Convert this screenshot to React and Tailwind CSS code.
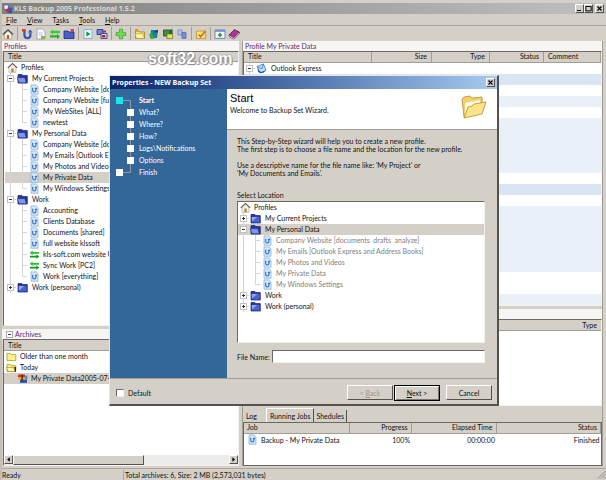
import React from "react";

const svg = "block h-[11px] w-[11px] shrink-0";

function HomeIcon() {
  return (
    <svg viewBox="0 0 11 11" className={svg}>
      <path d="M2 5v5.3h7V5L5.5 2z" fill="#f3efe4" stroke="#a8a296" strokeWidth=".6" />
      <path d="M.8 5.8 5.5 1.4l4.7 4.4" fill="none" stroke="#5b5550" strokeWidth="1.1" />
      <path d="M4.4 10.3V6.5h2.2v3.8z" fill="#b77a35" />
    </svg>
  );
}

function FolderIcon({ open }) {
  return (
    <svg viewBox="0 0 11 11" className={svg}>
      <path d="M1 1.6h4l1 1h4.3v7.4H1z" fill="#2338a0" stroke="#111c66" strokeWidth=".7" />
      {open ? (
        <path d="M.2 4.6h7.6l1.6 5.2H2z" fill="#7f95ea" stroke="#1b2a80" strokeWidth=".6" />
      ) : (
        <path d="M1.6 3.8h8v5.6h-8z" fill="#4a62d0" />
      )}
      {!open && <path d="M1.8 4h5.4L2 8.6z" fill="#93a6f0" />}
    </svg>
  );
}

function DocIcon() {
  return (
    <svg viewBox="0 0 11 11" className={svg}>
      <path d="M2 .9h5.2L9 2.7v7.5H2z" fill="#d5e8fb" stroke="#7fa8d4" strokeWidth=".7" />
      <path d="M3.7 3.8v2.6c0 2 3.2 2 3.2 0V4.8" fill="none" stroke="#2a6cc6" strokeWidth="1.1" />
      <path d="M5.5 5 7 3.2 8.5 5z" fill="#2a6cc6" />
    </svg>
  );
}

function SyncIcon() {
  return (
    <svg viewBox="0 0 11 11" className={svg}>
      <path d="M.8 3.8 3.6 1.4v1.5H10v1.8H3.6v1.5z" fill="#25c32b" />
      <path d="M10.2 7.6 7.4 5.2v1.5H1v1.8h6.4V10z" fill="#149a1d" />
    </svg>
  );
}

function YellowFolder({ open }) {
  return (
    <svg viewBox="0 0 11 11" className={svg}>
      <path d="M1 2.4h3.4l1 1.2h4.4v6H1z" fill="#fbf08a" stroke="#a89b2c" strokeWidth=".8" />
      {open && <path d="M.5 5.4h7l1.6 4.2H2z" fill="#fff7a8" stroke="#8c7f1d" strokeWidth=".6" />}
      {open && <path d="M8.2 5h1.8v4.8H9z" fill="#2b2810" />}
    </svg>
  );
}

function ArchiveIcon() {
  return (
    <svg viewBox="0 0 11 11" className={svg}>
      <path d="M1 1.5h7v3H1z" fill="#d8321e" />
      <path d="M1 4.5h7v2H1z" fill="#f0b41c" />
      <path d="M3 6.5h7v3.4H3z" fill="#2c57b8" />
      <path d="M8 2.5h2.4v4H8z" fill="#3b9bd0" />
      <path d="M4.4 1.5h1.4v7H4.4z" fill="#4b2a1c" />
    </svg>
  );
}

function MailIcon() {
  return (
    <svg viewBox="0 0 11 11" className={svg}>
      <path d="M1 3.5 7.5 1l2.5 6.5L4 10z" fill="#bfe0f8" stroke="#2f78c2" strokeWidth=".8" />
      <path d="m1.2 3.6 4.8 2.2L7.5 1" fill="none" stroke="#2f78c2" strokeWidth=".8" />
      <path d="M2 6.5c.5 3 4 4 6.5 1.6" fill="none" stroke="#1750a0" strokeWidth="1.3" />
    </svg>
  );
}

const icons = {
  home: <HomeIcon />,
  folder: <FolderIcon />,
  open: <FolderIcon open />,
  doc: <DocIcon />,
  sync: <SyncIcon />,
};

function Expander({ plus }) {
  return (
    <svg viewBox="0 0 11 11" className={svg}>
      <path d="M5.5 0v3M5.5 8v3M8 5.5h3" stroke="#d4d4d4" />
      <rect x="2.5" y="2.5" width="6" height="6" fill="#fff" stroke="#c0c0c0" />
      <path d="M4 5.5h3" stroke="#333" />
      {plus && <path d="M5.5 4v3" stroke="#333" />}
    </svg>
  );
}

function Guide({ last, branch }) {
  return (
    <svg viewBox="0 0 11 11" className={svg}>
      <path d={last ? "M5.5 0v5.5" : "M5.5 0v11"} stroke="#d4d4d4" />
      {branch && <path d="M5.5 5.5H10" stroke="#d4d4d4" />}
    </svg>
  );
}

function Tree({ rows, label }) {
  return (
    <ul role="tree" aria-label={label} className="m-0 list-none">
      {rows.map((r, i) => (
        <li
          key={i}
          role="treeitem"
          aria-selected={!!r.sel}
          className={"flex h-[11px] items-center whitespace-pre leading-[11px] " + (r.sel ? "bg-[#d4d0c8]" : "")}
        >
          {r.level === 0 && <span className="flex w-[13px] justify-end">{icons[r.icon]}</span>}
          {r.level === 1 && (
            <>
              <Expander plus={r.icon === "folder"} />
              <span className="flex w-[13px] justify-center">{icons[r.icon]}</span>
            </>
          )}
          {r.level === 2 && (
            <>
              <Guide />
              <span className="flex w-[13px] justify-center">
                <Guide branch last={r.last} />
              </span>
              {icons[r.icon]}
            </>
          )}
          <span className={"pl-[3px] " + (r.dim ? "text-[#808080]" : "")}>{r.text}</span>
        </li>
      ))}
    </ul>
  );
}

const profileRows = [
  { level: 0, icon: "home", text: "Profiles" },
  { level: 1, icon: "open", text: "My Current Projects" },
  { level: 2, icon: "doc", text: "Company Website [doc" },
  { level: 2, icon: "doc", text: "Company Website [full" },
  { level: 2, icon: "doc", text: "My WebSites [ALL]" },
  { level: 2, icon: "doc", text: "newtest", last: true },
  { level: 1, icon: "open", text: "My Personal Data" },
  { level: 2, icon: "doc", text: "Company Website [doc" },
  { level: 2, icon: "doc", text: "My Emails [Outlook Exp" },
  { level: 2, icon: "doc", text: "My Photos and Videos" },
  { level: 2, icon: "doc", text: "My Private Data", sel: true },
  { level: 2, icon: "doc", text: "My Windows Settings", last: true },
  { level: 1, icon: "open", text: "Work" },
  { level: 2, icon: "doc", text: "Accounting" },
  { level: 2, icon: "doc", text: "Clients Database" },
  { level: 2, icon: "doc", text: "Documents [shared]" },
  { level: 2, icon: "doc", text: "full website klssoft" },
  { level: 2, icon: "sync", text: "kls-soft.com website UP" },
  { level: 2, icon: "sync", text: "Sync Work [PC2]" },
  { level: 2, icon: "doc", text: "Work [everything]", last: true },
  { level: 1, icon: "folder", text: "Work (personal)" },
];

const locationRows = [
  { level: 0, icon: "home", text: "Profiles" },
  { level: 1, icon: "folder", text: "My Current Projects" },
  { level: 1, icon: "open", text: "My Personal Data", sel: true },
  { level: 2, icon: "doc", dim: true, text: "Company Website [documents  drafts  analyze]" },
  { level: 2, icon: "doc", dim: true, text: "My Emails [Outlook Express and Address Books]" },
  { level: 2, icon: "doc", dim: true, text: "My Photos and Videos" },
  { level: 2, icon: "doc", dim: true, text: "My Private Data" },
  { level: 2, icon: "doc", dim: true, text: "My Windows Settings", last: true },
  { level: 1, icon: "folder", text: "Work" },
  { level: 1, icon: "folder", text: "Work (personal)" },
];

const sunken =
  "border border-t-[#6b6862] border-l-[#6b6862] border-r-[#f4f2ee] border-b-[#f4f2ee] bg-white";
const raised =
  "border border-t-white border-l-white border-r-[#55524e] border-b-[#55524e] bg-[#d4d0c8]";
const head =
  "h-[10px] border-b border-r border-[#a19d95] bg-[#d4d0c8] p-0 leading-[9px] font-normal";

function ToolSep() {
  return <span className="mx-[2px] h-[13px] w-px bg-[#a29e96]" />;
}

function Tool({ label, children }) {
  return (
    <button type="button" aria-label={label} className="flex w-[14px] justify-center">
      <svg viewBox="0 0 12 12" className="block h-[12px] w-[12px]">
        {children}
      </svg>
    </button>
  );
}

function Toolbar() {
  return (
    <div className="-ml-px flex h-[15px] shrink-0 items-center">
      <Tool label="Home">
        <path d="M2.5 6v5h7V6L6 2.6z" fill="#f7f3ea" stroke="#9b958a" strokeWidth=".6" />
        <path d="M1 6.5 6 1.8l5 4.7" fill="none" stroke="#4b4642" strokeWidth="1.2" />
        <path d="M4.8 11V7h2.4v4z" fill="#b06a2a" />
      </Tool>
      <ToolSep />
      <Tool label="New backup">
        <path d="M3.4 2v4.8c0 4.4 6 4.4 6 0V4.6" fill="none" stroke="#3355b8" strokeWidth="2.2" />
        <path d="M6.8 4.6 9.2 1.6l2.4 3z" fill="#3355b8" />
        <path d="M1 1h3.6v2.6H1z" fill="#d43c2c" />
      </Tool>
      <Tool label="New document">
        <path d="M2 1h5.6L10 3.4V11H2z" fill="#fafcff" stroke="#8fa0b4" strokeWidth=".8" />
        <path d="M3.6 5h4M3.6 7h4" stroke="#9db4cc" strokeWidth=".8" />
        <path d="M6 8h4v3H6z" fill="#8fb04f" />
      </Tool>
      <Tool label="Synchronize">
        <path d="M1 4 4 1.2v1.6h7v2.4H4v1.6z" fill="#35cc36" />
        <path d="M11 8.4 8 5.8v1.4H1v2.4h7v1.6z" fill="#22b42a" />
      </Tool>
      <Tool label="Folder">
        <path d="M1 3h4l1 1h5v6.5H1z" fill="#4b5fc8" stroke="#1c2878" strokeWidth=".8" />
        <path d="M7.8 1h3v3h-3z" fill="#c83a6a" />
      </Tool>
      <ToolSep />
      <Tool label="Run">
        <path d="M2 1.5h8v9H2z" fill="#e2f2ff" stroke="#7ba6cf" strokeWidth=".8" />
        <path d="M4.4 3.4 8.4 6l-4 2.6z" fill="#15952a" />
      </Tool>
      <Tool label="Restore">
        <path d="M1 1.5h6v5H1z" fill="#6d7cd4" stroke="#25317d" strokeWidth=".8" />
        <path d="M5 5.5h6v5H5z" fill="#d9dcf8" stroke="#25317d" strokeWidth=".8" />
        <path d="M6 7h3.4v2.6H6zM7 2.4h3v2H7z" fill="#b62d34" />
      </Tool>
      <ToolSep />
      <Tool label="Add">
        <path d="M4.4 1.2h3.2v3.2h3.2v3.2H7.6v3.2H4.4V7.6H1.2V4.4h3.2z" fill="#6fdc4c" stroke="#2f9f2b" strokeWidth=".7" />
      </Tool>
      <ToolSep />
      <Tool label="Open folder">
        <path d="M1.5 3h3.4l1 1h4.6v6.4h-9z" fill="#f5e36c" stroke="#988320" strokeWidth=".8" />
        <path d="M1 5.8h8l1.4 4.6h-8z" fill="#fff3a2" stroke="#988320" strokeWidth=".5" />
        <path d="M1 1h3v2.4H1z" fill="#f08f28" />
      </Tool>
      <Tool label="Filter">
        <path d="M3 2h7l-1 8H2z" fill="#1a8290" />
        <path d="M1 6.6 4 5l3 5.4-4 .6z" fill="#3aa346" />
        <path d="m5 4 5-2.6v3.4z" fill="#1d3fa4" />
      </Tool>
      <Tool label="Extract">
        <path d="M1.5 2h6v6h-6z" fill="#3d8f3c" stroke="#174f1e" strokeWidth=".8" />
        <path d="M5 6h5.6v4.6H5z" fill="#f1dc62" stroke="#8a7618" strokeWidth=".8" />
        <path d="M8 1.4h2.6V6H8z" fill="#20663c" />
      </Tool>
      <Tool label="Export">
        <path d="M2 2h4v5H2z" fill="#b7c4ef" stroke="#6c7cc0" strokeWidth=".7" />
        <path d="M6 4.4h4v6H6z" fill="#7e8edb" stroke="#4c5ab0" strokeWidth=".7" />
      </Tool>
      <ToolSep />
      <Tool label="Options">
        <path d="M1.4 3h9.2v7.6H1.4z" fill="#f7e27a" stroke="#b08f28" strokeWidth=".8" />
        <path d="m3.6 6.4 2 2.4 4.6-5.6" fill="none" stroke="#d8641c" strokeWidth="1.4" />
      </Tool>
      <ToolSep />
      <Tool label="Window">
        <path d="M1 2h10v8.4H1z" fill="#f2f6fc" stroke="#5773a8" strokeWidth=".8" />
        <path d="M1 2h10v1.8H1z" fill="#6c8fd0" />
        <path d="M6 4.6 8.4 7 6 9.4 3.6 7z" fill="#3fa04a" />
      </Tool>
      <Tool label="Help">
        <path d="m1 7 5.4-5.4L11.4 4 6 9.8z" fill="#a93593" stroke="#5a1450" strokeWidth=".7" />
        <path d="m1 7 5 2.8L11.4 4v1.6L6 11.2 1 8.6z" fill="#fff" stroke="#5a1450" strokeWidth=".6" />
      </Tool>
    </div>
  );
}

function WinButton({ label, children }) {
  return (
    <button type="button" aria-label={label} className={raised + " flex h-[9px] w-[9px] items-center justify-center"}>
      <svg viewBox="0 0 7 7" className="block h-[7px] w-[7px]">
        {children}
      </svg>
    </button>
  );
}

const cross = <path d="m1.5 1.5 4 4m0-4-4 4" stroke="#000" strokeWidth="1.1" />;

const stripes = [
  "bg-white", "bg-[#d9e5f2]", "bg-white", "bg-[#e9f0f8]", "bg-white",
  "bg-[#e9f0f8]", "bg-[#e9f0f8]", "bg-[#e9f0f8]", "bg-[#e9f0f8]", "bg-[#e9f0f8]",
  "bg-white", "bg-[#d9e5f2]", "bg-white",
  "bg-[#e9f0f8]", "bg-[#e9f0f8]", "bg-[#e9f0f8]", "bg-[#e9f0f8]", "bg-[#e9f0f8]", "bg-[#e9f0f8]",
  "bg-white", "bg-white", "bg-[#e9f0f8]",
];

function DetailsTable() {
  return (
    <table className="w-full table-fixed border-collapse text-left">
      <thead>
        <tr>
          <th className={head + " pl-[4px]"}>Title</th>
          <th className={head + " w-[60px] pr-[4px] text-right"}>Size</th>
          <th className={head + " w-[58px] pr-[4px] text-right"}>Type</th>
          <th className={head + " w-[54px] pr-[4px] text-right"}>Status</th>
          <th className={head + " w-[57px] pl-[4px]"}>Comment</th>
        </tr>
      </thead>
      <tbody>
        {stripes.map((c, i) => (
          <tr key={i} className={c}>
            <td colSpan={5} className="h-[11px] p-0 leading-[11px]">
              {i === 0 && (
                <span className="flex items-center">
                  <Expander />
                  <span className="pl-px"><MailIcon /></span>
                  <span className="pl-[4px]">Outlook Express</span>
                </span>
              )}
              {i === 1 && (
                <span className="flex items-center pl-[24px]">
                  <YellowFolder />
                </span>
              )}
            </td>
          </tr>
        ))}
      </tbody>
    </table>
  );
}

function PaneLabel({ children }) {
  return (
    <div className="flex h-[10px] shrink-0 items-center bg-[#f6f5f3] pl-[2px] leading-[10px] text-[#5c2a6e]">
      {children}
    </div>
  );
}

function Archives() {
  return (
    <section className="flex h-[137px] shrink-0 flex-col">
      <PaneLabel>
        <svg viewBox="0 0 7 7" className="mx-[2px] block h-[7px] w-[7px]">
          <rect x=".5" y=".5" width="6" height="6" fill="#fff" stroke="#aaa" />
          <path d="M2 3.5h3" stroke="#333" />
        </svg>
        Archives
      </PaneLabel>
      <div className={sunken + " ml-px flex min-h-0 flex-1 flex-col"}>
        <div className="h-[11px] shrink-0 border-b border-[#a19d95] bg-[#d4d0c8] pl-[4px] leading-[10px]">Title</div>
        <ul className="m-0 flex-1 list-none overflow-hidden">
          <li className="flex h-[11px] items-center pl-[2px] leading-[11px]">
            <YellowFolder /><span className="pl-[3px]">Older than one month</span>
          </li>
          <li className="flex h-[11px] items-center pl-[2px] leading-[11px]">
            <YellowFolder open /><span className="pl-[3px]">Today</span>
          </li>
          <li className="flex h-[11px] items-center bg-[#d4d0c8] pl-[13px] leading-[11px]">
            <ArchiveIcon /><span className="whitespace-nowrap pl-[3px]">My Private Data2005-07-08</span>
          </li>
        </ul>
        <div className="flex h-[10px] shrink-0 bg-[#edebe7]">
          <WinButton label="Scroll left"><path d="M4.8 1.2v4.6L2.2 3.5z" fill="#000" /></WinButton>
          <div className={raised + " w-[131px]"} />
          <div className="flex-1" />
          <WinButton label="Scroll right"><path d="M2.4 1.2v4.6L5 3.5z" fill="#000" /></WinButton>
        </div>
      </div>
    </section>
  );
}

function Jobs() {
  return (
    <section className="flex h-[60px] shrink-0 flex-col">
      <div role="tablist" className="flex h-[16px] shrink-0 items-end">
        <button type="button" role="tab" className="h-[12px] pl-[3px] pr-[9px] leading-[12px]">Log</button>
        <button
          type="button"
          role="tab"
          aria-selected="true"
          className="h-[14px] border-r border-t border-l border-t-white border-l-white border-r-[#55524e] px-[3px] leading-[12px]"
        >
          Running Jobs
        </button>
        <button type="button" role="tab" className="h-[12px] border-r border-[#55524e] px-[2px] leading-[12px]">
          Shedules
        </button>
      </div>
      <div className="min-h-0 flex-1 border border-[#6b6862] bg-white">
        <table className="w-full table-fixed border-collapse whitespace-nowrap text-right">
          <thead>
            <tr>
              <th className={head + " w-[105px] pl-[3px] text-left"}>Job</th>
              <th className={head + " w-[62px] pr-[3px]"}>Progress</th>
              <th className={head + " w-[85px] pr-[3px]"}>Elapsed Time</th>
              <th className={head + " pr-[3px]"}>Status</th>
            </tr>
          </thead>
          <tbody>
            <tr>
              <td className="p-0 text-left">
                <span className="flex h-[12px] items-center pl-[3px]">
                  <DocIcon /><span className="pl-[3px]">Backup - My Private Data</span>
                </span>
              </td>
              <td className="p-0 pr-px">100%</td>
              <td className="p-0 pr-px">00:00:00</td>
              <td className="p-0 pr-px">Finished</td>
            </tr>
          </tbody>
        </table>
      </div>
    </section>
  );
}

const steps = ["Start", "What?", "Where?", "How?", "Logs\\Notifications", "Options", "Finish"];

function Wizard() {
  return (
    <div
      role="dialog"
      aria-label="Properties - NEW Backup Set"
      className="absolute left-[107px] top-[75px] w-[390px] border border-b-2 border-r-2 border-t-[#e8e6e2] border-l-[#e8e6e2] border-r-[#55524e] border-b-[#55524e] bg-[#d4d0c8]"
    >
      <div className="flex h-[13px] items-center justify-between bg-linear-to-r from-[#0a246a] to-[#a6caf0] pl-[2px] pr-[2px] font-['Open_Sans','Noto_Sans',sans-serif] text-[7px] font-bold text-white">
        <span>Properties - NEW Backup Set</span>
        <WinButton label="Close">{cross}</WinButton>
      </div>
      <div className="flex h-[289px]">
        <ol className="m-0 w-[117px] shrink-0 list-none bg-[#336699] pl-[6px] pt-[5px] text-white">
          {steps.map((s, i) => {
            const edge = i === 0 || i === 6;
            return (
              <li key={s} className="flex h-[12px] items-center leading-[12px]">
                <svg viewBox="0 0 18 12" className="block h-[12px] w-[18px]">
                  {i === 0 && <path d="M7 6.5h7.5V12" fill="none" stroke="#8f9aa5" />}
                  {i === 6 && <path d="M7 6.5h7.5V0" fill="none" stroke="#8f9aa5" />}
                  {!edge && <path d="M14.5 0v12" stroke="#8f9aa5" />}
                  <rect x={edge ? 0 : 11} y="3" width="7" height="7" fill={i === 0 ? "#19e6e6" : "#fff"} />
                </svg>
                <span className={"pl-[5px] " + (i === 0 ? "font-bold" : "")}>{s}</span>
              </li>
            );
          })}
        </ol>
        <div className="flex min-w-0 flex-1 flex-col">
          <header className="flex h-[41px] shrink-0 justify-between border-b border-[#a19d95] bg-white pl-[3px] pr-[9px] pt-[2px]">
            <div>
              <h1 className="font-['Liberation_Sans',Arial,sans-serif] text-[11px] leading-[14px] text-black">Start</h1>
              <p className="leading-[10px]">Welcome to Backup Set Wizard.</p>
            </div>
            <svg viewBox="0 0 28 26" className="mt-[3px] block h-[26px] w-[28px]">
              <path d="M2 5 4 3l6-1 2 2 10-1v8L4 23z" fill="#efd06a" stroke="#b58d2c" strokeWidth=".8" />
              <path d="M5 9 20 6l1 12L5 22z" fill="#fffbe0" />
              <path d="M8 13 12 12l2-2 12-2-4 12L4 24z" fill="#fbe487" stroke="#b58d2c" strokeWidth=".8" />
            </svg>
          </header>
          <div className="flex flex-1 flex-col pl-[10px] pr-[12px] pt-[7px]">
            <p className="whitespace-nowrap leading-[8px]">
              This Step-by-Step wizard will help you to create a new profile.
              <br />
              The first step is to choose a file name and the location for the new profile.
            </p>
            <p className="mt-[8px] leading-[8px]">
              Use a descriptive name for the file name like: &apos;My Project&apos; or
              <br />
              &apos;My Documents and Emails&apos;.
            </p>
            <p className="mt-[13px] leading-[10px]">Select Location</p>
            <div className={sunken + " mt-px h-[142px] shrink-0"}>
              <Tree rows={locationRows} label="Select Location" />
            </div>
            <div className="mt-[7px] flex items-center">
              <label htmlFor="file-name" className="w-[35px] whitespace-nowrap">File Name:</label>
              <input id="file-name" autoFocus className={sunken + " h-[13px] min-w-0 flex-1 px-px outline-none"} />
            </div>
          </div>
        </div>
      </div>
      <footer className="flex h-[26px] items-center border-t border-[#a19d95] pl-[6px] pr-[5px] pt-[2px]">
        <label className="flex flex-1 items-center gap-[4px]">
          <input type="checkbox" className={sunken + " h-[8px] w-[8px] appearance-none"} />
          Default
        </label>
        <button type="button" disabled className={raised + " h-[15px] w-[46px] text-[#9a968e]"}>
          &lt; <u>B</u>ack
        </button>
        <button type="button" className="ml-px h-[16px] w-[46px] border border-black bg-[#d4d0c8] shadow-[inset_1px_1px_0_#fff,inset_-1px_-1px_0_#77736d]">
          <u>N</u>ext &gt;
        </button>
        <button type="button" className={raised + " ml-[6px] h-[15px] w-[46px]"}>Cancel</button>
      </footer>
    </div>
  );
}

export default function App() {
  return (
    <main className="relative flex h-screen flex-col overflow-hidden border-l-2 border-[#c4c0b8] bg-[#d4d0c8] font-['Lato',Roboto,sans-serif] text-[7px] leading-[10px] text-[#111]">
      <div className="mt-[3px] flex h-[11px] shrink-0 items-center bg-linear-to-r from-[#808080] to-[#c0c0c0] pl-px pr-[2px] font-['Open_Sans','Noto_Sans',sans-serif] text-[7px] font-bold text-[#dcd9d2]">
        <svg viewBox="0 0 11 11" className="block h-[10px] w-[10px]">
          <path d="M1 1h5v5H1z" fill="#f2f2ff" stroke="#5a5ab4" />
          <path d="M5 4h5v6H5z" fill="#3454b8" />
          <path d="M3 5.4h4v3H3z" fill="#c03440" />
        </svg>
        <span className="flex-1 pl-px">KLS Backup 2005 Professional 1.5.2</span>
        <WinButton label="Minimize"><path d="M1 5.5h4" stroke="#000" /></WinButton>
        <WinButton label="Maximize"><path d="M.8 1.5h5.4v4.4H.8z" fill="none" stroke="#000" /></WinButton>
        <span className="pl-[2px]"><WinButton label="Close">{cross}</WinButton></span>
      </div>
      <nav className="flex h-[12px] shrink-0 items-center gap-[10px] border-b border-[#aaa69e] pl-[4px]">
        <button type="button"><u>F</u>ile</button>
        <button type="button"><u>V</u>iew</button>
        <button type="button">T<u>a</u>sks</button>
        <button type="button"><u>T</u>ools</button>
        <button type="button"><u>H</u>elp</button>
      </nav>
      <Toolbar />
      <div className="flex min-h-0 flex-1">
        <div className="flex w-[237px] shrink-0 flex-col gap-[3px]">
          <section className="flex min-h-0 flex-1 flex-col">
            <PaneLabel>Profiles</PaneLabel>
            <div className={sunken + " ml-px min-h-0 flex-1 overflow-hidden"}>
              <div className="h-[10px] border-b border-[#a19d95] bg-[#d4d0c8] pl-[4px] leading-[9px]">Title</div>
              <div className="pl-px">
                <Tree rows={profileRows} label="Profiles" />
              </div>
            </div>
          </section>
          <Archives />
        </div>
        <div className="ml-[3px] mr-[3px] flex min-w-0 flex-1 flex-col border-l border-r border-[#a19d95]">
          <section className="flex min-h-0 flex-1 flex-col">
            <PaneLabel>Profile My Private Data</PaneLabel>
            <div className={sunken + " min-h-0 flex-1 overflow-hidden"}>
              <DetailsTable />
            </div>
          </section>
          <section className="mt-[3px] flex h-[97px] shrink-0 flex-col">
            <PaneLabel />
            <div className={sunken + " min-h-0 flex-1"}>
              <div className="h-[11px] border-b border-[#a19d95] bg-[#d4d0c8] pr-[4px] text-right leading-[10px]">Type</div>
            </div>
          </section>
          <Jobs />
        </div>
      </div>
      <footer className="mt-[2px] flex h-[12px] shrink-0 items-center border-t border-[#aaa69e]">
        <span className="w-[121px]">Ready</span>
        <span className="flex-1 border-l border-[#aaa69e] pl-px">Total archives: 6, Size: 2 MB (2,573,031 bytes)</span>
        <svg viewBox="0 0 9 9" className="block h-[9px] w-[9px]">
          <path d="M8.5 1 1 8.5M8.5 4 4 8.5M8.5 7 7 8.5" stroke="#8c8880" />
        </svg>
      </footer>
      <div className="absolute left-[146px] top-[50px] font-['Liberation_Sans',Arial,sans-serif] text-[16px] font-bold leading-[18px] text-white [text-shadow:0_0_1px_#777,1px_1px_1px_#888,-1px_0_1px_#999]">
        soft32.com
      </div>
      <Wizard />
    </main>
  );
}
